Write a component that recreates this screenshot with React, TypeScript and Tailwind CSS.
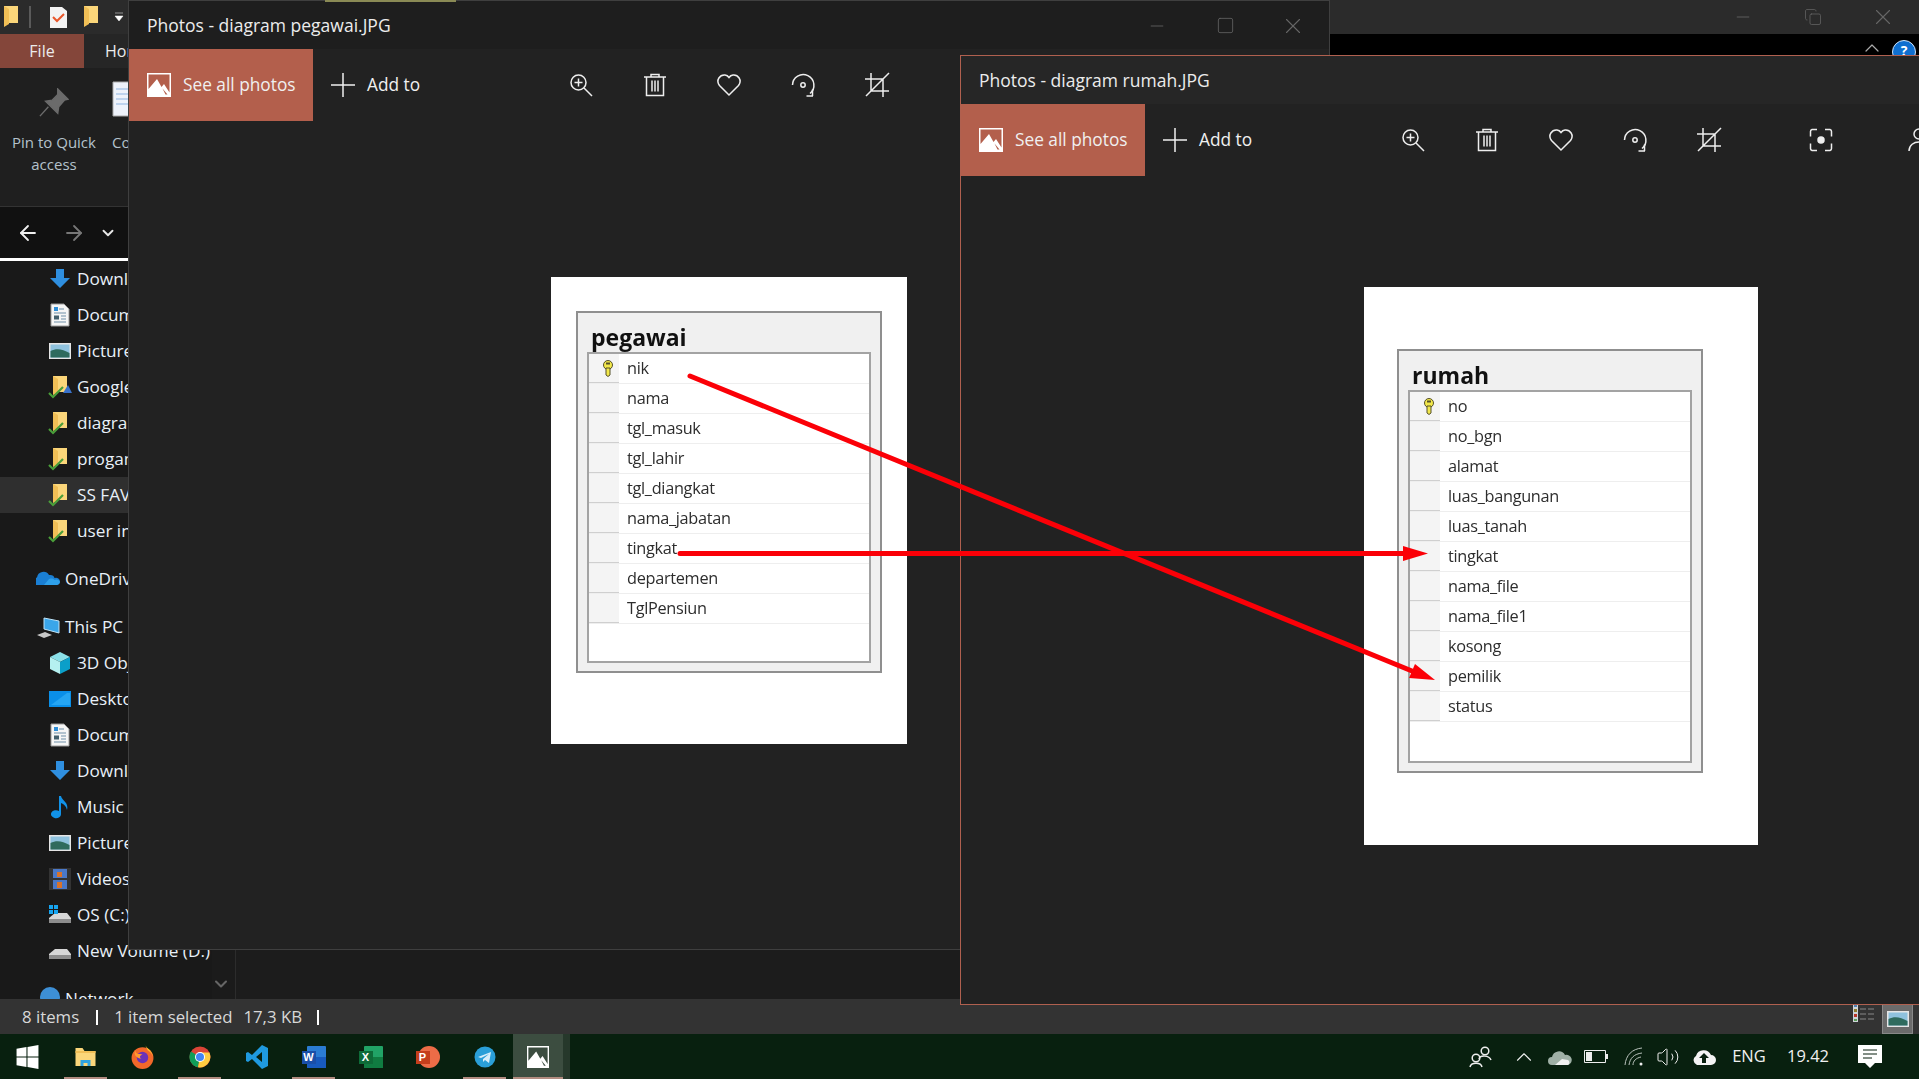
import React from 'react';
import { ChevronDown, ChevronUp, Volume2, ArrowLeft, ArrowRight, Minus, X, Square, Copy } from 'lucide-react';

const PhotoMark = ({ size = 24 }: { size?: number }) => (
    <svg width={size} height={size} viewBox="0 0 24 24">
        <path
            fillRule="evenodd"
            d="M0 0h24v24H0zM1.500 1.500V16L10 6l4.500 8 2.500-3 5.500 8.500V1.500zM15.500 15.500l3 6h2z"
            fill="#fff"
        />
    </svg>
);

const ToolIcon = ({ name }: { name: string }) => {
    const shape: Record<string, React.ReactNode> = {
        zoom: (
            <>
                <circle cx="9.500" cy="9.500" r="7.500" />
                <path d="M9.500 5.500v8M5.500 9.500h8M15 15l8 8" />
            </>
        ),
        trash: (
            <>
                <path d="M1 4h22M8 4V1.500h8V4M3.500 4v18.500h17V4M9 7.500v11M12 7.500v11M15 7.500v11" />
            </>
        ),
        heart: <path d="M12 22L2.500 12.500C-1.500 7 3 1.500 8 2c2 .2 3 1 4 2.500C13 3 14 2.200 16 2c5-.5 9.500 5 5.500 10.500z" />,
        rotate: (
            <>
                <path d="M1.500 12A10.700 10.700 0 1 1 19 20.500" />
                <path d="M15.500 23h6.500M21.500 16.500V23" />
                <circle cx="12" cy="12" r="2.200" />
            </>
        ),
        crop: <path d="M0 6h18v18M6 0v18h18M1 23L24 0" />,
        scan: (
            <>
                <path d="M8 1.500H3A2 2 0 0 0 1.500 3.500v5M16 1.500h5a2 2 0 0 1 1.500 2v5M8 22.500H3a2 2 0 0 1-1.500-2v-5M16 22.500h5a2 2 0 0 0 1.500-2v-5" />
                <circle cx="12" cy="12" r="3" fill="#eee" />
            </>
        ),
        person: (
            <>
                <circle cx="12" cy="6" r="5" />
                <path d="M2 23c0-12 20-12 20 0" />
            </>
        ),
    };
    return (
        <svg width="24" height="24" viewBox="0 0 24 24" fill="none" stroke="#eee" strokeWidth="1.500" className="overflow-visible">
            {shape[name]}
        </svg>
    );
};

const KeyIcon = () => (
    <svg width="12" height="17" viewBox="0 0 12 17" className="shrink-0">
        <circle cx="6" cy="5" r="4.500" fill="#f2e84a" stroke="#55502a" strokeWidth="1" />
        <path d="M4 8h4v7l-2 1.500L4 15z" fill="#f2e84a" stroke="#55502a" strokeWidth="1" />
        <rect x="4" y="2.500" width="4" height="2" fill="#55502a" />
    </svg>
);

const DbTable = ({ title, columns, footer }: { title: string; columns: string[]; footer: string }) => (
    <div className="w-[306px] border-2 border-[#8f8f8f] bg-[#f0f0f0] px-[9px] pb-[8px] blur-[0.3px]">
        <div className="h-[39px] flex items-end pl-[4px] text-[23px] leading-[30px] font-bold text-[#111] font-['Open_Sans',sans-serif]">{title}</div>
        <div className={`border-2 border-[#a3a3a3] bg-white ${footer}`}>
            {columns.map((col, i) => (
                <div key={col} className="flex h-[30px] border-b border-[#eeeeee]">
                    <div className="w-[30px] flex items-center justify-center bg-[#f4f4f4] border-b border-[#cfcfcf] pl-[8px]">
                        {i === 0 && <KeyIcon />}
                    </div>
                    <div className="pl-[8px] text-[16.300px] leading-[28px] tracking-[-0.3px] text-[#2d2d2d] font-['Open_Sans',sans-serif]">{col}</div>
                </div>
            ))}
        </div>
    </div>
);

const PhotosWindow = ({
    title,
    active,
    children,
    extra,
    className,
}: {
    title: string;
    active?: boolean;
    children: React.ReactNode;
    extra?: boolean;
    className: string;
}) => (
    <div className={`absolute w-[1202px] flex flex-col bg-[#222222] border ${active ? 'border-[#b0604f]' : 'border-[#3f3f3f]'} ${className}`}>
        <div className={`h-[48px] shrink-0 flex items-center pl-[18px] pt-[1px] text-[17.500px] text-[#ececec] ${active ? 'bg-[#262626]' : 'bg-[#1e1e1e]'}`}>
            {title}
            {!active && (
                <div className="ml-auto flex items-center text-[#666]">
                    <div className="w-[68px] flex justify-center"><Minus size={20} strokeWidth={1} /></div>
                    <div className="w-[68px] flex justify-center"><Square size={19} strokeWidth={1} /></div>
                    <div className="w-[68px] flex justify-center mr-[2px]"><X size={26} strokeWidth={1} /></div>
                </div>
            )}
        </div>
        <div className="h-[72px] shrink-0 flex items-center text-[17.300px] text-[#f0f0f0]">
            <div className="w-[184px] h-full bg-[#b35f4c] flex items-center pl-[18px] gap-[12px]">
                <PhotoMark />
                <span>See all photos</span>
            </div>
            <div className="w-[231px] flex items-center pl-[18px] gap-[12px]">
                <svg width="24" height="24" viewBox="0 0 24 24" stroke="#f0f0f0" strokeWidth="1.500"><path d="M12 0v24M0 12h24" /></svg>
                <span>Add to</span>
            </div>
            {['zoom', 'trash', 'heart', 'rotate', 'crop'].map(name => (
                <div key={name} className="w-[74px] flex justify-center"><ToolIcon name={name} /></div>
            ))}
            {extra && (
                <>
                    <div className="w-[74px] ml-[38px] flex justify-center"><ToolIcon name="scan" /></div>
                    <div className="w-[74px] ml-[24px] flex justify-center"><ToolIcon name="person" /></div>
                </>
            )}
        </div>
        {children}
    </div>
);

const Folder = ({ check, drive }: { check?: boolean; drive?: boolean }) => (
    <svg width="24" height="24" viewBox="0 0 24 24">
        <path d="M5 1h14v16H5z" fill="#fbd67a" />
        <path d="M5 1l5 3v14l-5 2z" fill="#f1bf56" />
        {drive && <path d="M15 18l5-8 4 8z" fill="#3a72c9" />}
        {check && <path d="M1 18l4 4L15 12" fill="none" stroke="#4a9e3a" strokeWidth="2.200" />}
    </svg>
);

const DocIcon = () => (
    <svg width="24" height="24" viewBox="0 0 24 24">
        <path d="M3 1h13l5 5v17H3z" fill="#f6f6f6" stroke="#9a9a9a" />
        <path d="M6 4h4v4H6z" fill="#2f8fd8" />
        <path d="M11 6h5M6 10h12M13 13h5M13 16h5M6 19h12" stroke="#6f8fa8" strokeWidth="1" />
        <path d="M6 12.500h5v4H6z" fill="#44606e" />
    </svg>
);

const PictureIcon = () => (
    <svg width="24" height="24" viewBox="0 0 24 24">
        <path d="M1 4h22v16H1z" fill="#e6e6e6" />
        <path d="M2.500 5.500h19v13h-19z" fill="#8fc2de" />
        <path d="M2.500 12c6-3 12-2 19 2v4.500h-19z" fill="#2f6b5e" />
    </svg>
);

const DownIcon = () => (
    <svg width="24" height="24" viewBox="0 0 24 24">
        <path d="M8 2h8v9h6L12 21 2 11h6z" fill="#2f8fe0" />
    </svg>
);

const NavIcon = ({ kind }: { kind: string }) => {
    if (kind === 'down') return <DownIcon />;
    if (kind === 'doc') return <DocIcon />;
    if (kind === 'pic') return <PictureIcon />;
    if (kind === 'folder') return <Folder check />;
    if (kind === 'drive') return <Folder check drive />;
    if (kind === 'onedrive')
        return (
            <svg width="24" height="24" viewBox="0 0 24 24">
                <path d="M0 18a4 4 0 0 1 1-7.500A6.500 6.500 0 0 1 13 8c3-.5 5 .8 5.500 3a4 4 0 0 1 5.500 4 3.500 3.500 0 0 1-3 3z" fill="#1a7fd4" />
                <path d="M8 18l5-6c3-1 5 0 5.500 1a4 4 0 0 1 5.500 2 3.500 3.500 0 0 1-3 3z" fill="#2ea0ea" />
            </svg>
        );
    if (kind === 'pc')
        return (
            <svg width="24" height="24" viewBox="0 0 24 24">
                <path d="M8 3l15 3v12L8 14z" fill="#3aa6ea" stroke="#bfe3f7" />
                <path d="M1 20l8-3 7 3-8 3z" fill="#c9c9c9" />
            </svg>
        );
    if (kind === 'cube')
        return (
            <svg width="24" height="24" viewBox="0 0 24 24">
                <path d="M12 1l10 5-10 5L2 6z" fill="#8be0e8" />
                <path d="M2 6l10 5v12L2 18z" fill="#b5f0f0" />
                <path d="M22 6l-10 5v12l10-5z" fill="#0b9fc9" />
            </svg>
        );
    if (kind === 'desktop')
        return (
            <svg width="24" height="24" viewBox="0 0 24 24">
                <path d="M1 4h22v16H1z" fill="#0a8fe8" />
                <path d="M3 18l16-12h3v12z" fill="#25a5f2" />
            </svg>
        );
    if (kind === 'music')
        return (
            <svg width="24" height="24" viewBox="0 0 24 24">
                <path d="M11 1h2c1 5 8 6 6 14-1-4-3-6-6-7v11a5 4 0 1 1-2-3z" fill="#1192e8" />
            </svg>
        );
    if (kind === 'video')
        return (
            <svg width="24" height="24" viewBox="0 0 24 24">
                <path d="M1 1h22v22H1z" fill="#333" />
                <path d="M5 2h14v9H5z" fill="#4a78c8" />
                <path d="M5 13h14v9H5z" fill="#4a78c8" />
                <path d="M9 5h5v5H9zM9 15h5v6H9z" fill="#d8732a" />
            </svg>
        );
    if (kind === 'os' || kind === 'vol')
        return (
            <svg width="24" height="24" viewBox="0 0 24 24">
                <path d="M7 10h12l4 5v5H1v-5z" fill="#d6d6d6" />
                <path d="M1 16h22v4H1z" fill="#8d8d8d" />
                {kind === 'os' && <path d="M1 2h4v4H1zM6 2h4v4H6zM1 7h4v4H1zM6 7h4v4H6z" fill="#16a4f0" />}
            </svg>
        );
    return (
        <svg width="24" height="24" viewBox="0 0 24 24">
            <circle cx="14" cy="10" r="10" fill="#3d8fd6" />
            <path d="M0 12h15v11H0z" fill="#2a7cc8" />
        </svg>
    );
};

const navGroups = [
    {
        className: 'pl-[48px] gap-[5px]',
        items: [
            ['down', 'Downloads'],
            ['doc', 'Documents'],
            ['pic', 'Pictures'],
            ['drive', 'Google Drive'],
            ['folder', 'diagram'],
            ['folder', 'progam'],
            ['folder', 'SS FAVORIT'],
            ['folder', 'user interface'],
        ],
    },
    { className: 'pl-[36px] gap-[5px]', items: [['onedrive', 'OneDrive']] },
    { className: 'pl-[36px] gap-[5px]', items: [['pc', 'This PC']] },
];

const pcItems = [
    ['cube', '3D Objects'],
    ['desktop', 'Desktop'],
    ['doc', 'Documents'],
    ['down', 'Downloads'],
    ['music', 'Music'],
    ['pic', 'Pictures'],
    ['video', 'Videos'],
    ['os', 'OS (C:)'],
    ['vol', 'New Volume (D:)'],
];

const NavRow = ({ kind, label, className }: { kind: string; label: string; className: string }) => (
    <div className={`h-[36px] flex items-center whitespace-nowrap text-[17.200px] text-[#e8f0f8] ${className} ${label === 'SS FAVORIT' ? 'bg-[#2f2f2f]' : ''}`}>
        <span className="shrink-0"><NavIcon kind={kind} /></span>
        <span>{label}</span>
    </div>
);

const Explorer = () => (
    <div className="flex-1 min-h-0 flex flex-col bg-[#1f1f1f]">
        {/* quick access bar */}
        <div className="h-[34px] shrink-0 bg-[#2b2b2b] flex items-center relative">
            <div className="ml-[3px] w-[15px]"><svg width="15" height="22" viewBox="0 0 15 22"><path d="M1 0h14v17H1z" fill="#fbd67a" /><path d="M1 0l5 3v15l-5 3z" fill="#f1bf56" /></svg></div>
            <div className="ml-[11px] w-[2px] h-[22px] bg-[#5a5a5a]" />
            <div className="ml-[19px]"><svg width="17" height="22" viewBox="0 0 17 22"><path d="M0 1h12l5 4v17H0z" fill="#f3f3f3" /><path d="M3 11l4 4 7-7" stroke="#e8562a" strokeWidth="2" fill="none" /></svg></div>
            <div className="ml-[16px]"><svg width="15" height="22" viewBox="0 0 15 22"><path d="M1 0h14v17H1z" fill="#fbd67a" /><path d="M1 0l5 3v15l-5 3z" fill="#f1bf56" /></svg></div>
            <div className="ml-[16px]"><svg width="10" height="10" viewBox="0 0 10 10"><path d="M1 1h8M1 4h8l-4 5z" fill="#fff" stroke="#fff" strokeWidth="0.500" /></svg></div>
        </div>
        {/* tabs */}
        <div className="h-[34px] shrink-0 bg-[#262626] flex text-[16px] text-[#ececec]">
            <div className="w-[84px] bg-[#84463a] flex items-center justify-center">File</div>
            <div className="pl-[21px] flex items-center">Home</div>
        </div>
        {/* ribbon */}
        <div className="h-[139px] shrink-0 bg-[#1f1f1f] flex border-b border-[#333]">
            <div className="w-[108px] pt-[20px] flex flex-col items-center text-[15px] leading-[22px] text-[#b4c2cc]">
                <svg width="30" height="30" viewBox="0 0 32 32" className="mb-[13px]"><path d="M20 1l11 11-4 1-6 7-1 7-13-13 7-1 6-6zM10 20L1 30" fill="#6b6b6b" stroke="#6b6b6b" strokeWidth="1.500" /></svg>
                <span className="whitespace-nowrap">Pin to Quick</span>
                <span>access</span>
            </div>
            <div className="pl-[4px] pt-[13px] flex flex-col text-[15px] leading-[22px] text-[#b4c2cc]">
                <svg width="32" height="42" viewBox="0 0 32 42" className="mb-[8px]"><path d="M1 1h26v34H1z" fill="#eef2fa" stroke="#aaa" /><path d="M4 8h20M4 13h20M4 18h20M4 23h20" stroke="#8fb4e0" /></svg>
                <span>Copy</span>
            </div>
        </div>
        {/* address row */}
        <div className="h-[51px] shrink-0 bg-[#111111] flex items-center">
            <ArrowLeft size={24} strokeWidth={1.800} className="ml-[16px] text-[#f0f0f0]" />
            <ArrowRight size={24} strokeWidth={1.800} className="ml-[22px] text-[#777]" />
            <ChevronDown size={18} strokeWidth={2.500} className="ml-[13px] text-[#e8e8e8]" />
        </div>
        <div className="h-[3px] shrink-0 bg-white" />
        {/* tree */}
        <div className="flex-1 min-h-0 flex overflow-hidden">
            <div className="w-[212px] shrink-0 bg-[#191919]">
                {navGroups.map((group, g) => (
                    <div key={g} className={g === 0 ? '' : 'mt-[12px]'}>
                        {group.items.map(([kind, label]) => (
                            <NavRow key={label} kind={kind} label={label} className={group.className} />
                        ))}
                    </div>
                ))}
                {pcItems.map(([kind, label]) => (
                    <NavRow key={label + kind} kind={kind} label={label} className="pl-[48px] gap-[5px]" />
                ))}
                <div className="mt-[12px]">
                    <NavRow kind="net" label="Network" className="pl-[36px] gap-[5px]" />
                </div>
            </div>
            <div className="w-[24px] shrink-0 bg-[#1b1b1b] flex flex-col justify-end items-center pb-[5px] border-r border-[#2c2c2c]">
                <ChevronDown size={20} strokeWidth={2.500} className="text-[#666] -ml-[6px]" />
            </div>
            <div className="flex-1 bg-[#1c1c1c]" />
        </div>
        {/* status bar */}
        <div className="h-[35px] shrink-0 bg-[#333333] flex items-center pt-[1px] text-[16.800px] text-[#d8d8d8]">
            <span className="ml-[22px]">8 items</span>
            <div className="ml-[17px] w-[2px] h-[15px] bg-white" />
            <span className="ml-[16px]">1 item selected</span>
            <span className="ml-[11px]">17,3 KB</span>
            <div className="ml-[15px] w-[2px] h-[15px] bg-white" />
            <div className="ml-auto flex items-center h-full">
                <svg width="22" height="21" viewBox="0 0 22 21" className="self-start mt-[2px]">
                    <path d="M0 0h5v20H0z" fill="#cfd4d8" />
                    <path d="M1 2h3v3H1z" fill="#4f7fb0" /><path d="M1 7h3v3H1z" fill="#8f7a2a" /><path d="M1 12h3v3H1z" fill="#b8352a" /><path d="M1 17h3v2H1z" fill="#5a9f5a" />
                    <path d="M7 2h6M15 2h6M7 7h6M15 7h6M7 12h6M15 12h6M7 17h6M15 17h6" stroke="#888" />
                </svg>
                <div className="ml-[7px] mr-[6px] w-[31px] h-[30px] self-end bg-[#6b6b6b] border border-[#888] flex items-center justify-center">
                    <PictureIcon />
                </div>
            </div>
        </div>
    </div>
);

const TaskIcon = ({ name }: { name: string }) => {
    if (name === 'files')
        return (
            <svg width="23" height="22" viewBox="0 0 22 22">
                <path d="M1 2h7l2 3h11v15H1z" fill="#fbd67a" />
                <path d="M1 5h20v2H1z" fill="#f1bf56" />
                <path d="M6 20v-6h10v6h-3v-3H9v3z" fill="#2fa3e0" />
            </svg>
        );
    if (name === 'firefox')
        return (
            <svg width="23" height="25" viewBox="0 0 22 24">
                <circle cx="11" cy="13.500" r="10.500" fill="#f2682a" />
                <path d="M13 0c1 4 8 6 8 13 0-3-3-6-5-7z" fill="#ffc02e" />
                <circle cx="11" cy="13" r="5.500" fill="#6a32b8" />
                <path d="M4 6c1 5 4 3 7 4-3 1-3 3-1 4-4 0-8-3-6-8z" fill="#ff9a30" />
            </svg>
        );
    if (name === 'chrome')
        return (
            <svg width="22" height="22" viewBox="0 0 22 22">
                <circle cx="11" cy="11" r="10.500" fill="#db4437" />
                <path d="M11 11L2 5.500A10.500 10.500 0 0 0 9 21.300z" fill="#0f9d58" />
                <path d="M11 6.500h9.300A10.500 10.500 0 0 1 9 21.300L11 11z" fill="#ffcd40" />
                <circle cx="11" cy="11" r="5" fill="#fff" />
                <circle cx="11" cy="11" r="4" fill="#4285f4" />
            </svg>
        );
    if (name === 'vscode')
        return (
            <svg width="24" height="24" viewBox="0 0 22 24">
                <path d="M16 0l6 3v18l-6 3L6 14l-4 3-2-1V8l2-1 4 3zM16 7l-6 5 6 5z" fill="#1f9ae0" />
            </svg>
        );
    if (name === 'word' || name === 'excel') {
        const word = name === 'word';
        return (
            <div className="relative w-[24px] h-[22px]">
                <div className={`absolute left-[5px] right-0 inset-y-0 rounded-[1px] ${word ? 'bg-[#2b7cd3]' : 'bg-[#21a366]'}`} />
                <div className={`absolute left-[5px] right-0 top-[11px] bottom-0 ${word ? 'bg-[#185abd]' : 'bg-[#107c41]'}`} />
                <div className={`absolute left-0 top-[5px] w-[14px] h-[13px] flex items-center justify-center text-[11px] font-bold text-white font-['Liberation_Sans',sans-serif] ${word ? 'bg-[#1a4fa8]' : 'bg-[#0e6b38]'}`}>
                    {word ? 'W' : 'X'}
                </div>
            </div>
        );
    }
    if (name === 'powerpoint')
        return (
            <div className="relative w-[24px] h-[22px]">
                <div className="absolute left-[2px] right-0 inset-y-0 rounded-full bg-[#ed6c47]" />
                <div className="absolute left-0 top-[5px] w-[14px] h-[13px] flex items-center justify-center text-[11px] font-bold text-white bg-[#c43e1c] font-['Liberation_Sans',sans-serif]">P</div>
            </div>
        );
    if (name === 'telegram')
        return (
            <svg width="22" height="22" viewBox="0 0 22 22">
                <circle cx="11" cy="11" r="10.500" fill="#2a9fd8" />
                <path d="M4 11l13-5-2 11-4-3-2 2v-3l6-5-8 4z" fill="#d8eefa" />
            </svg>
        );
    return <PhotoMark size={22} />;
};

const taskItems = [
    { name: 'files', open: true },
    { name: 'firefox', open: false },
    { name: 'chrome', open: true },
    { name: 'vscode', open: false },
    { name: 'word', open: true },
    { name: 'excel', open: false },
    { name: 'powerpoint', open: false },
    { name: 'telegram', open: true },
    { name: 'photos', open: true },
];

const Taskbar = () => (
    <div className="h-[45px] shrink-0 bg-[#08200f] flex items-center text-[#f0f0f0]">
        <div className="w-[57px] h-full flex items-center pl-[15px] shrink-0">
            <svg width="25" height="24" viewBox="0 0 21 23"><path d="M0 3.500L9.500 2v9H0zM10.500 1.800L21 0v11H10.500zM0 12h9.500v9L0 19.500zM10.500 12H21v11l-10.500-1.800z" fill="#fff" /></svg>
        </div>
        {taskItems.map(item => (
            <div key={item.name} className={`relative w-[57px] h-full flex items-center justify-center ${item.name === 'photos' ? 'bg-[#3c4d40] border-r-[7px] border-[#26382b]' : ''}`}>
                <TaskIcon name={item.name} />
                {item.open && <div className={`absolute bottom-0 h-[2px] bg-[#b28c80] ${item.name === 'photos' ? 'inset-x-0' : 'inset-x-[7px]'}`} />}
            </div>
        ))}
        <div className="ml-auto flex items-center h-full mr-[21px] text-[16.500px]">
            <div className="w-[48px] flex justify-center">
                <svg width="23" height="22" viewBox="0 0 23 22" fill="none" stroke="#eee" strokeWidth="1.500"><circle cx="16" cy="5" r="3.800" /><path d="M10 13c1-4 10-4 12 1" /><circle cx="7" cy="12" r="3.800" /><path d="M1 21c1-5 11-5 12 0" /></svg>
            </div>
            <div className="w-[40px] flex justify-center"><ChevronUp size={26} strokeWidth={1} /></div>
            <div className="w-[32px] flex justify-center">
                <svg width="24" height="16" viewBox="0 0 24 16"><path d="M4 16a4 4 0 0 1 0-8 7 7 0 0 1 13-2 5 5 0 0 1 3 10z" fill="#9fb0a6" /><path d="M7 16l7-6 6 1a3 3 0 0 1 0 5z" fill="#f0f0f0" /></svg>
            </div>
            <div className="w-[40px] flex justify-center">
                <svg width="24" height="13" viewBox="0 0 24 13"><path d="M.5.500h21v12H.5z" fill="none" stroke="#eee" /><path d="M2 2h6v9H2zM22 4h2v5h-2z" fill="#eee" /></svg>
            </div>
            <div className="w-[36px] flex justify-center">
                <svg width="20" height="19" viewBox="0 0 20 19" fill="none" stroke="#b9c2bc" strokeWidth="1"><path d="M1 18C2 8 8 2 18 1M5 18c1-7 5-11 13-12M9 18c0-4 3-7 8-8" /><circle cx="17" cy="17" r="1.500" fill="#eee" stroke="none" /></svg>
            </div>
            <div className="w-[32px] flex justify-center"><Volume2 size={24} strokeWidth={1} /></div>
            <div className="w-[40px] flex justify-center">
                <svg width="24" height="16" viewBox="0 0 24 16"><path d="M5 16a5 5 0 0 1-1-9 8 8 0 0 1 15-1 5 5 0 0 1 0 10z" fill="#f4f4f4" /><path d="M12 4l5 5h-3v5h-4V9H7z" fill="#08200f" /></svg>
            </div>
            <div className="w-[50px] text-center">ENG</div>
            <div className="w-[68px] text-center">19.42</div>
            <div className="w-[56px] flex justify-center">
                <svg width="24" height="24" viewBox="0 0 24 24"><path d="M0 0h24v18h-7l-5 5-5-5H0z" fill="#fff" /><path d="M5 5h14M5 9h14M5 13h9" stroke="#08200f" strokeWidth="1.200" /></svg>
            </div>
        </div>
    </div>
);

const Arrows = () => (
    <svg className="absolute inset-0 pointer-events-none" width="1919" height="1079" viewBox="0 0 1919 1079">
        <path d="M690 376L1412 671" stroke="#fb0007" strokeWidth="5" strokeLinecap="round" />
        <path d="M1415 664L1435 680L1409 678z" fill="#fb0007" />
        <path d="M680 553.500H1406" stroke="#fb0007" strokeWidth="5" strokeLinecap="round" />
        <path d="M1403 546L1428 553.500L1403 561z" fill="#fb0007" />
    </svg>
);

export default function App() {
    return (
        <div className="relative w-[1919px] h-[1079px] overflow-hidden flex flex-col bg-black font-['Open_Sans',sans-serif]">
            <Explorer />
            <Taskbar />

            {/* explorer's own caption, still behind the photo windows */}
            <div className="absolute right-0 top-0 w-[589px] h-[34px] bg-[#2b2b2b] flex items-center justify-end text-[#666]">
                <div className="w-[70px] flex justify-center"><Minus size={20} strokeWidth={1} /></div>
                <div className="w-[70px] flex justify-center"><Copy size={18} strokeWidth={1} /></div>
                <div className="w-[70px] flex justify-center mr-[1px]"><X size={26} strokeWidth={1} /></div>
            </div>
            <div className="absolute right-0 top-[34px] w-[589px] h-[21px] bg-black" />
            <ChevronUp size={24} strokeWidth={1.200} className="absolute left-[1860px] top-[36px] text-[#aaa]" />
            <div className="absolute left-[1892px] top-[40px] w-[24px] h-[24px] rounded-full bg-[#0f6fd0] border border-[#cfe4fa] text-center text-[14px] leading-[20px] font-bold text-white">?</div>

            <PhotosWindow title="Photos - diagram pegawai.JPG" className="left-[128px] top-0 h-[950px]">
                <div className="absolute left-[196px] top-[-1px] w-[131px] h-[2px] bg-[#8a8a55]" />
                <div className="pt-[156px] flex justify-center">
                    <div className="w-[356px] h-[467px] bg-white pt-[34px] pl-[25px]">
                        <DbTable
                            title="pegawai"
                            footer="h-[311px]"
                            columns={['nik', 'nama', 'tgl_masuk', 'tgl_lahir', 'tgl_diangkat', 'nama_jabatan', 'tingkat', 'departemen', 'TglPensiun']}
                        />
                    </div>
                </div>
            </PhotosWindow>

            <PhotosWindow title="Photos - diagram rumah.JPG" active extra className="left-[960px] top-[55px] h-[950px]">
                <div className="pt-[111px] flex justify-center">
                    <div className="w-[394px] h-[558px] bg-white pt-[62px] pl-[33px]">
                        <DbTable
                            title="rumah"
                            footer="h-[373px]"
                            columns={['no', 'no_bgn', 'alamat', 'luas_bangunan', 'luas_tanah', 'tingkat', 'nama_file', 'nama_file1', 'kosong', 'pemilik', 'status']}
                        />
                    </div>
                </div>
            </PhotosWindow>

            <Arrows />
        </div>
    );
}
